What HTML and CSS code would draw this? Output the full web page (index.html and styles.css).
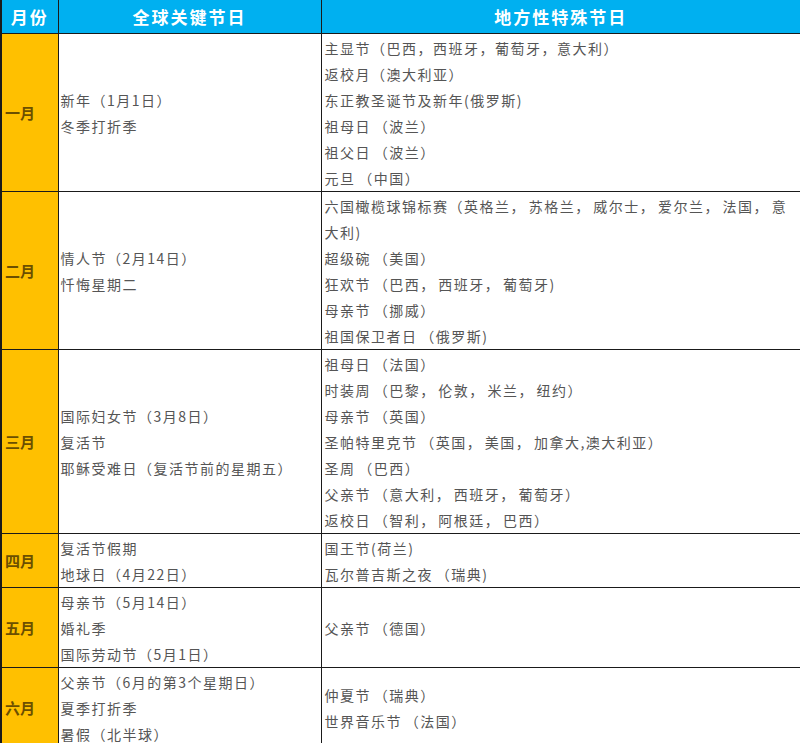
FILE: index.html
```html
<!DOCTYPE html>
<html lang="zh-CN">
<head>
<meta charset="utf-8">
<title>全球节日</title>
<link rel="stylesheet" href="styles.css">
</head>
<body>
<table class="cal">
  <colgroup>
    <col class="c-month">
    <col class="c-global">
    <col class="c-local">
  </colgroup>
  <thead>
    <tr>
      <th>月份</th>
      <th>全球关键节日</th>
      <th>地方性特殊节日</th>
    </tr>
  </thead>
  <tbody>
    <tr>
      <td class="month">一月</td>
      <td class="global"><div>新年（1月1日）</div><div>冬季打折季</div></td>
      <td class="local"><div>主显节（巴西，西班牙，葡萄牙，意大利）</div><div>返校月（澳大利亚）</div><div>东正教圣诞节及新年(俄罗斯)</div><div>祖母日 （波兰）</div><div>祖父日 （波兰）</div><div>元旦 （中国）</div></td>
    </tr>
    <tr>
      <td class="month">二月</td>
      <td class="global"><div>情人节（2月14日）</div><div>忏悔星期二</div></td>
      <td class="local"><div>六国橄榄球锦标赛（英格兰， 苏格兰， 威尔士， 爱尔兰， 法国， 意大利)</div><div>超级碗 （美国）</div><div>狂欢节 （巴西， 西班牙， 葡萄牙)</div><div>母亲节 （挪威）</div><div>祖国保卫者日 （俄罗斯)</div></td>
    </tr>
    <tr>
      <td class="month">三月</td>
      <td class="global"><div>国际妇女节（3月8日）</div><div>复活节</div><div>耶稣受难日（复活节前的星期五）</div></td>
      <td class="local"><div>祖母日 （法国）</div><div>时装周 （巴黎， 伦敦， 米兰， 纽约）</div><div>母亲节 （英国）</div><div>圣帕特里克节 （英国， 美国， 加拿大,澳大利亚）</div><div>圣周 （巴西）</div><div>父亲节 （意大利， 西班牙， 葡萄牙）</div><div>返校日 （智利， 阿根廷， 巴西）</div></td>
    </tr>
    <tr>
      <td class="month">四月</td>
      <td class="global"><div>复活节假期</div><div>地球日（4月22日）</div></td>
      <td class="local"><div>国王节(荷兰)</div><div>瓦尔普吉斯之夜 （瑞典)</div></td>
    </tr>
    <tr>
      <td class="month">五月</td>
      <td class="global"><div>母亲节（5月14日）</div><div>婚礼季</div><div>国际劳动节（5月1日）</div></td>
      <td class="local"><div>父亲节 （德国）</div></td>
    </tr>
    <tr>
      <td class="month">六月</td>
      <td class="global"><div>父亲节（6月的第3个星期日）</div><div>夏季打折季</div><div>暑假（北半球）</div></td>
      <td class="local"><div>仲夏节 （瑞典）</div><div>世界音乐节 （法国）</div></td>
    </tr>
  </tbody>
</table>
</body>
</html>
```

FILE: styles.css
```css
html, body {
  margin: 0;
  padding: 0;
  background: #ffffff;
}

.cal {
  width: 800px;
  table-layout: fixed;
  border-collapse: collapse;
  font-family: "Noto Sans CJK SC", "Noto Sans", sans-serif;
}

.c-month { width: 57px; }
.c-global { width: 263px; }
.c-local { width: 480px; }

.cal th {
  background: #00b0f0;
  color: #ffffff;
  font-size: 17px;
  font-weight: bold;
  letter-spacing: 2px;
  height: 33px;
  padding: 0;
  text-align: center;
  vertical-align: middle;
  border-left: 1px solid #1a1a1a;
  border-bottom: 1px solid #1a1a1a;
  line-height: 20px;
}

.cal th:first-child {
  border-left: 2px solid #1a1a1a;
}

.cal th:last-child {
  border-right: 2px solid #1a1a1a;
}

.cal td {
  border: 1px solid #1a1a1a;
  vertical-align: middle;
  font-size: 14px;
  line-height: 26px;
  letter-spacing: 1.5px;
  word-spacing: -2px;
  color: #555555;
  padding: 1px 2px 0;
}

.cal td.month {
  background: #ffc000;
  color: #6b4f00;
  font-weight: bold;
  font-size: 15px;
  letter-spacing: 0;
  padding-left: 3px;
  border-left: 2px solid #1a1a1a;
}

.cal td.local {
  padding-left: 3px;
  border-right: 2px solid #1a1a1a;
}
```
